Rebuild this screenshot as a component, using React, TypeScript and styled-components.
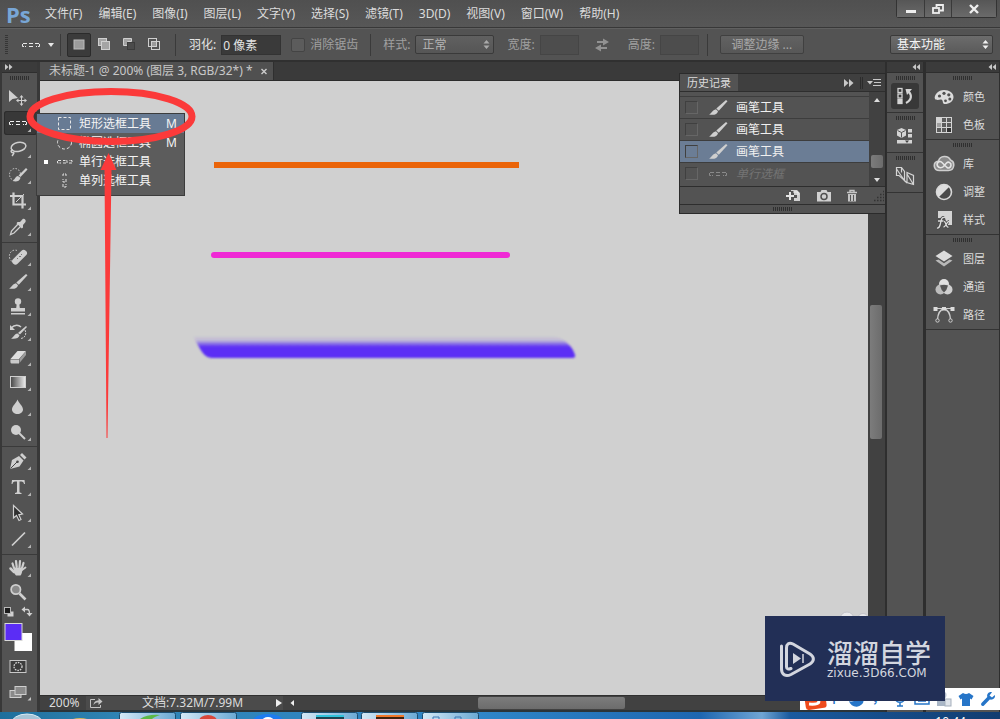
import React from "react";
import styled, { createGlobalStyle } from "styled-components";

const ui = '"Noto Sans", "Noto Sans CJK SC", sans-serif';

const GlobalStyle = createGlobalStyle`
  * { box-sizing: border-box; }
  body { margin: 0; background: #535353; }
  button, input, select { font: inherit; color: inherit; margin: 0; border-radius: 0; }
  button { padding: 0; border: 0; background: none; }
  svg { display: block; flex: none; }
`;

/* ---------- shell ---------- */

const Screen = styled.div`
  position: relative;
  display: flex;
  flex-direction: column;
  min-height: 100vh;
  overflow: hidden;
  background: #535353;
  color: #dcdcdc;
  font: 12px/16px ${ui};
`;

const MenuBar = styled.header`
  display: flex;
  align-items: center;
  height: 28px;
  padding-right: 3px;
  border-bottom: 1px solid #383838;
  background: linear-gradient(#505050, #575757);
`;

const Brand = styled.span`
  width: 45px;
  padding-left: 6px;
  color: #78a6d6;
  font: bold 22px/24px "Open Sans", sans-serif;
`;

const Menus = styled.nav`
  display: flex;
  gap: 16px;
`;

const MenuButton = styled.button`
  height: 24px;
  white-space: nowrap;
`;

const WindowButtons = styled.div`
  display: flex;
  align-self: flex-start;
  margin-left: auto;
  border: 1px solid #333;
  border-top: 0;
  border-radius: 0 0 3px 3px;
`;

const WindowButton = styled.button<{ $wide?: boolean }>`
  display: grid;
  place-items: center;
  width: ${(p) => (p.$wide ? 45 : 27)}px;
  height: 17px;
  background: linear-gradient(#565656, #6a6a6a);
  & + & { border-left: 1px solid #3a3a3a; }
`;

const OptionsBar = styled.section`
  display: flex;
  align-items: center;
  height: 34px;
  padding: 0 7px 0 5px;
  border-top: 1px solid #606060;
  border-bottom: 2px solid #303030;
  background: #535353;
  white-space: nowrap;
`;

const Divider = styled.i<{ $left?: number; $right?: number }>`
  width: 1px;
  height: 22px;
  margin: 0 ${(p) => p.$right ?? 6}px 0 ${(p) => p.$left ?? 8}px;
  background: #3a3a3a;
`;

const ToolPreset = styled.button`
  display: flex;
  align-items: center;
  gap: 7px;
  margin-left: 13px;
`;

const ModeButton = styled.button<{ $active?: boolean }>`
  display: grid;
  place-items: center;
  width: 24px;
  height: 24px;
  margin-right: 1px;
  border: 1px solid ${(p) => (p.$active ? "#2b2b2b" : "transparent")};
  border-radius: 2px;
  background: ${(p) => (p.$active ? "#3b3b3b" : "none")};
`;

const Field = styled.label<{ $dim?: boolean; $gap?: number }>`
  display: flex;
  align-items: center;
  gap: 5px;
  margin-right: ${(p) => p.$gap ?? 0}px;
  color: ${(p) => (p.$dim ? "#a0a0a0" : "#e4e4e4")};
`;

const TextBox = styled.input<{ $w: number }>`
  width: ${(p) => p.$w}px;
  height: 20px;
  padding: 0 1px;
  border: 1px solid ${(p) => (p.disabled ? "#454545" : "#333")};
  background: ${(p) => (p.disabled ? "#4d4d4d" : "#3a3a3a")};
  outline: 0;
`;

const CheckBox = styled.input`
  appearance: none;
  width: 14px;
  height: 14px;
  border: 1px solid #444;
  border-radius: 2px;
  background: #5c5c5c;
`;

const SelectBox = styled.span<{ $w: number; $bright?: boolean; $end?: boolean }>`
  position: relative;
  width: ${(p) => p.$w}px;
  margin-left: ${(p) => (p.$end ? "auto" : 0)};
  color: ${(p) => (p.$bright ? "#f4f4f4" : "#b4b4b4")};
  select {
    appearance: none;
    display: block;
    width: 100%;
    height: 19px;
    padding: 0 6px;
    border: 1px solid #3a3a3a;
    border-radius: 2px;
    background: linear-gradient(${(p) => (p.$bright ? "#6c6c6c, #5a5a5a" : "#606060, #565656")});
    line-height: 16px;
    opacity: 1;
  }
  svg {
    position: absolute;
    top: 5px;
    right: 4px;
    pointer-events: none;
  }
`;

const PushButton = styled.button`
  width: 84px;
  height: 19px;
  margin-left: 6px;
  border: 1px solid #404040;
  border-radius: 2px;
  background: linear-gradient(#626262, #575757);
  color: #a8a8a8;
`;

const Swap = styled.button`
  width: 16px;
  margin: 0 18px 0 15px;
`;

const Workspace = styled.main`
  position: relative;
  display: flex;
  flex: 1;
  background: #383838;
`;

/* ---------- tools ---------- */

const ToolColumn = styled.aside`
  display: flex;
  flex-direction: column;
  width: 40px;
  border: 0 solid #383838;
  border-width: 0 3px 0 2px;
  background: #535353;
`;

const Collapse = styled.button<{ $end?: boolean }>`
  display: flex;
  align-items: center;
  justify-content: ${(p) => (p.$end ? "flex-end" : "flex-start")};
  height: 11px;
  padding: 0 3px;
  border-bottom: 1px solid #2e2e2e;
  background: #3b3b3b;
`;

const Grip = styled.i<{ $slim?: boolean }>`
  display: block;
  width: 19px;
  height: 4px;
  margin: ${(p) => (p.$slim ? 2 : 3)}px auto;
  background: repeating-linear-gradient(90deg, #2f2f2f 0 1px, #535353 1px 2px);
`;

const SideGrip = styled.i`
  width: 3px;
  height: 20px;
  background: repeating-linear-gradient(#363636 0 1px, #535353 1px 2px);
`;

const ToolGroup = styled.div<{ $pitch: number }>`
  display: grid;
  grid-auto-rows: ${(p) => p.$pitch}px;
  align-items: center;
  padding: 1px 0 2px;
  & + & { border-top: 1px solid #3a3a3a; }
`;

const Tool = styled.button<{ $active?: boolean }>`
  height: 24px;
  margin-left: 2px;
  border-radius: 3px;
  background: ${(p) => (p.$active ? "#383838" : "none")};
  box-shadow: ${(p) => (p.$active ? "inset 0 0 0 1px #2c2c2c" : "none")};
`;

const ColorArea = styled.div`
  padding-left: 1px;
`;

/* ---------- document ---------- */

const Document = styled.section`
  display: flex;
  flex: 1;
  flex-direction: column;
  min-width: 0;
`;

const TabStrip = styled.div`
  display: flex;
  height: 19px;
  border-bottom: 1px solid #2c2c2c;
  background: #3a3a3a;
`;

const DocTab = styled.div`
  display: flex;
  align-items: center;
  gap: 6px;
  padding: 0 4px 0 9px;
  border-right: 1px solid #2f2f2f;
  background: #505050;
  color: #c8c8c8;
`;

const CloseTab = styled.button`
  width: 10px;
  height: 16px;
`;

const CanvasRow = styled.div`
  display: flex;
  flex: 1;
`;

const Canvas = styled.div`
  flex: 1;
  background: #d0d0d0;
`;

const VScroll = styled.div`
  width: 17px;
  padding: 224px 2px 0;
  background: #414141;
`;

const Thumb = styled.i<{ $w: number; $h: number }>`
  display: block;
  width: ${(p) => p.$w}px;
  height: ${(p) => p.$h}px;
  border-radius: 2px;
  background: ${(p) => (p.$w > p.$h ? "linear-gradient(#7c7c7c, #6c6c6c)" : "linear-gradient(90deg, #7c7c7c, #6c6c6c)")};
`;

const StatusBar = styled.footer`
  display: flex;
  align-items: center;
  height: 17px;
  border-top: 1px solid #303030;
  border-bottom: 2px solid #2b3438;
  background: #414141;
`;

const Zoom = styled.span`
  width: 46px;
  padding-left: 9px;
  line-height: 14px;
`;

const StatusInfo = styled.button`
  display: flex;
  align-items: center;
  width: 197px;
  height: 14px;
  padding-left: 4px;
  background: #4b4b4b;
  line-height: 14px;
  span { flex: 1; text-align: left; padding-left: 39px; }
`;

const HScroll = styled.div`
  display: flex;
  flex: 1;
  align-items: center;
  padding-left: 7px;
  gap: 184px;
`;

/* ---------- docks ---------- */

const Dock = styled.aside<{ $w: number }>`
  display: flex;
  flex-direction: column;
  width: ${(p) => p.$w}px;
  border: 0 solid #2e2e2e;
  border-width: 0 1px 0 2px;
  background: #535353;
`;

const IconGroup = styled.div`
  display: flex;
  flex-direction: column;
  height: 40px;
  border-bottom: 1px solid #333;
`;

const DockButton = styled.button<{ $active?: boolean }>`
  display: grid;
  place-items: center;
  align-self: center;
  width: 28px;
  height: 26px;
  border-radius: 3px;
  background: ${(p) => (p.$active ? "#383838" : "none")};
`;

const PanelGroup = styled.div`
  display: flex;
  flex-direction: column;
  border-bottom: 1px solid #333;
`;

const PanelButton = styled.button`
  display: flex;
  align-items: center;
  gap: 8px;
  height: 28px;
  padding-left: 7px;
  font-size: 11px;
`;

/* ---------- floating history panel ---------- */

const History = styled.section`
  position: absolute;
  top: 11px;
  right: 114px;
  width: 207px;
  border: 1px solid #2b2b2b;
  background: #535353;
`;

const HistoryHead = styled.header`
  display: flex;
  align-items: center;
  height: 18px;
  padding-right: 3px;
  border-bottom: 1px solid #2e2e2e;
  background: #3f3f3f;
  h2 {
    margin: 0 auto 0 0;
    padding: 0 7px;
    background: #535353;
    font-size: 11px;
    line-height: 17px;
    font-weight: normal;
  }
`;

const HistoryBody = styled.div`
  display: flex;
`;

const HistoryList = styled.ul`
  flex: 1;
  margin: 0;
  padding: 4px 0 2px;
  list-style: none;
`;

const Step = styled.li<{ $on?: boolean; $off?: boolean }>`
  display: flex;
  align-items: center;
  height: 22px;
  padding-left: 5px;
  border-top: 1px solid #3d3d3d;
  background: ${(p) => (p.$on ? "#6b7d95" : "none")};
  color: ${(p) => (p.$off ? "#747474" : "#f0f0f0")};
  font-style: ${(p) => (p.$off ? "italic" : "normal")};
  svg { margin: 0 8px 0 10px; }
`;

const Source = styled.input`
  appearance: none;
  width: 13px;
  height: 13px;
  border: 1px solid #444;
  border-color: #404040 #666 #666 #404040;
  background: transparent;
`;

const ListScroll = styled.div`
  display: flex;
  flex-direction: column;
  align-items: center;
  width: 16px;
  padding: 6px 0 4px;
  background: #414141;
  ${Thumb} { margin: auto 0 10px; }
`;

const HistoryFoot = styled.footer`
  display: flex;
  align-items: center;
  justify-content: flex-end;
  gap: 14px;
  height: 19px;
  border: 1px solid #2e2e2e;
  border-width: 1px 0;
`;

/* ---------- flyout and annotation ---------- */

const Flyout = styled.div`
  position: absolute;
  top: 51px;
  left: 36px;
  width: 149px;
  padding: 0 0 5px;
  border: 1px solid #3c3c3c;
  background: #5c5c5c;
`;

const FlyoutItem = styled.button<{ $on?: boolean }>`
  display: grid;
  grid-template-columns: 20px 22px 1fr 18px;
  align-items: center;
  width: 100%;
  height: 19px;
  background: ${(p) => (p.$on ? "#687b94" : "none")};
  color: #f4f4f4;
  text-align: left;
  line-height: 18px;
`;

const Marker = styled.i<{ $on?: boolean }>`
  justify-self: center;
  width: 4px;
  height: 4px;
  margin-right: 2px;
  background: ${(p) => (p.$on ? "#fff" : "none")};
`;

const Annotation = styled.svg`
  position: absolute;
  top: 0;
  left: 0;
  pointer-events: none;
`;

/* ---------- desktop bottom ---------- */

const Taskbar = styled.footer`
  display: flex;
  height: 7px;
  overflow: hidden;
  padding-right: 34px;
  background: linear-gradient(90deg, #1f6f9c, #2f84b4 120px, #2f86c8 480px, #1d66b0 700px, #6fa5d4 762px, #1a5a9e 790px, #113c70);
`;

const Clock = styled.time`
  margin-left: auto;
  padding-top: 4px;
  color: #fff;
  font-size: 12px;
  line-height: 12px;
`;

const ImeBar = styled.div`
  position: absolute;
  right: 0;
  bottom: 9px;
  display: flex;
  align-items: center;
  gap: 4px;
  height: 22px;
  padding: 0 3px;
  background: #fff;
  color: #2675c8;
  font-weight: bold;
`;

const ImeKey = styled.button`
  display: grid;
  place-items: center;
  width: 18px;
  height: 20px;
`;

const Watermark = styled.div`
  position: absolute;
  right: 55px;
  bottom: 18px;
  display: flex;
  align-items: center;
  gap: 12px;
  width: 180px;
  height: 85px;
  padding-left: 15px;
  background: #222f56;
  color: #d3d6df;
  white-space: nowrap;
`;

const Bubbles = styled.svg`
  position: absolute;
  right: 130px;
  bottom: 94px;
`;

const WatermarkTitle = styled.div`
  font: 500 26px/28px "Noto Sans CJK SC", sans-serif;
`;

const WatermarkUrl = styled.div`
  font: 12px/14px "DejaVu Sans", sans-serif;
`;

/* ---------- drawings ---------- */

const G = "#cfcfcf";

const BrushShape = () => (
  <g fill={G}>
    <path d="M18 2 L19.500 3.300 L10.800 12.800 L8.300 10.600 Z" />
    <path d="M8 11.300 L10 13.200 C9.500 16.500 5.500 17.500 1 16.500 C4 15.500 4 12 8 11.300Z" />
  </g>
);

const Dashes = ({ color = G }: { color?: string }) => (
  <g fill="none" stroke={color} strokeWidth="1">
    <path d="M6 8.500H1.500V11.500H5 M8 11.500H12M8 8.500H12 M14 8.500H18.500V11.500H15" strokeDasharray="4 1" />
  </g>
);

const shapes: Record<string, React.ReactNode> = {
  move: (
    <g fill={G}>
      <path d="M1 3 L1 15 L4.500 12 L10 11 Z" />
      <path d="M13.500 8 L15.500 10.500H14V13H16.500V11.500L19 13.500L16.500 15.500V14H14V16.500H15.500L13.500 19L11.500 16.500H13V14H10.500V15.500L8 13.500L10.500 11.500V13H13V10.500H11.500Z" />
    </g>
  ),
  marquee: <Dashes color="#f0f0f0" />,
  lasso: (
    <g fill="none" stroke={G} strokeWidth="1.500">
      <ellipse cx="10.500" cy="8" rx="7.500" ry="4.500" transform="rotate(-12 10 8)" />
      <path d="M5 11C2 11 3 14 5 13.500C7 13 5 16 4 17" />
    </g>
  ),
  quick: (
    <g>
      <ellipse cx="7" cy="9.500" rx="5.500" ry="6" fill="none" stroke={G} strokeDasharray="1.500 1.500" />
      <path d="M18 3L19.500 4.500L12.500 12L10.500 10.500Z" fill={G} />
      <path d="M10 11L12.500 13C11.500 16.500 8 17 4.500 16C7 15 7 11.500 10 11Z" fill={G} />
    </g>
  ),
  crop: (
    <g fill="none" stroke={G} strokeWidth="2.200">
      <path d="M5.500 1.500V13.500H18M2 5H14.500V17.500" />
      <path d="M8 11L16 3" strokeWidth="1" />
    </g>
  ),
  eyedropper: (
    <g>
      <path d="M11 6L3.500 14L2.500 17.500L6 16L13.500 8.500" fill="none" stroke={G} strokeWidth="1.300" />
      <path d="M9.500 5L12 5L14.500 2.200C16 1 18.500 3 17.500 5L15 8V10.500L13.800 11.500L8.500 6.200Z" fill={G} />
    </g>
  ),
  healing: (
    <g>
      <path d="M9 3.500A5.500 6 0 1 0 5 15" fill="none" stroke={G} strokeDasharray="1.500 1.500" />
      <rect x="2.500" y="7" width="18" height="6.500" rx="3" transform="rotate(-45 11.500 10.200)" fill={G} />
      <path d="M9 11l1 1m1-3l1 1m1-3l1 1m-2 1l1 1m-4 1l1 1" stroke="#777" />
    </g>
  ),
  brush: <BrushShape />,
  stamp: (
    <g fill={G}>
      <circle cx="10" cy="4.500" r="3.200" />
      <path d="M8.700 7H11.300L11.800 11H17V14.500H3V11H8.200Z" />
      <path d="M3 16H17V17.500H3Z" />
    </g>
  ),
  historyBrush: (
    <g>
      <path d="M18 4L19 5L12 12.500L10 11Z" fill={G} />
      <path d="M9.500 11.500L11.500 13.200C11 16 7 17.500 3 16.500C6 15.500 6 12 9.500 11.500Z" fill={G} />
      <path d="M3 6C7 2 11 3 13 5" fill="none" stroke={G} strokeWidth="1.500" />
      <path d="M2 3V8H7Z" fill={G} />
      <path d="M17 8C19 12 17 16 13 16.500" fill="none" stroke={G} strokeDasharray="2 1" />
    </g>
  ),
  eraser: (
    <g>
      <path d="M9.500 4L18 4L11 12H2.500Z" fill="#dedede" />
      <path d="M18 4V8L11.500 16V12Z" fill="#9c9c9c" />
      <path d="M2.500 12.500H11V16.500H3.500Q2 16.500 2.500 12.500Z" fill="#c9c9c9" />
    </g>
  ),
  gradient: (
    <g>
      <defs>
        <linearGradient id="toolGradient">
          <stop offset="0" stopColor="#444" />
          <stop offset="1" stopColor="#eee" />
        </linearGradient>
      </defs>
      <rect x="2.500" y="4.500" width="15" height="11" fill="url(#toolGradient)" stroke={G} />
    </g>
  ),
  blur: <path d="M9.500 2.500C11 6.500 15 9 15 12.500C15 15 12.500 17 9.500 17C6.500 17 4 15 4 12.500C4 9 8 6.500 9.500 2.500Z" fill={G} />,
  dodge: (
    <g>
      <circle cx="8" cy="8" r="5" fill={G} />
      <path d="M11 11L17 17" stroke={G} strokeWidth="2" />
    </g>
  ),
  pen: (
    <g>
      <path d="M2 18L4 9L11 5L15.500 9.500L11.500 15.500Z" fill={G} />
      <path d="M12 4L14 2L18.500 6.500L16.500 8.500Z" fill={G} />
      <path d="M2.500 17.500L9 11" stroke="#484848" />
      <circle cx="9.500" cy="10.800" r="1.300" fill="#484848" />
    </g>
  ),
  type: <path d="M4 3H16.500L17 7H16C15.500 5 15 4.500 11.500 4.500V14.500C11.500 15.500 12 15.800 13.500 16V17H7V16C8.500 15.800 9 15.500 9 14.500V4.500C5.500 4.500 5 5 4.500 7H3.500Z" fill={G} />,
  select: <path d="M5.500 2.500V15L8.500 12.500L11 17.500L13 16.500L10.800 11.800L14.500 11Z" fill="#2f2f2f" stroke={G} strokeWidth="1.200" />,
  line: <path d="M4 16.500L17 3.500" stroke={G} strokeWidth="1.700" />,
  hand: (
    <g fill="none" stroke={G} strokeLinecap="round">
      <path d="M6 10L4.500 5.500M8.700 9L8 3M11.500 9L12 3M14 10L15.500 5" strokeWidth="2.200" />
      <path d="M2.500 10.500L6 14" strokeWidth="2.500" />
      <path d="M6 9.500H14.500C14.500 13 14 15.500 12.500 17.500H8C6.500 16 5.500 14 5.500 12Z" fill={G} stroke="none" />
      <path d="M14 12L17.500 9.500" strokeWidth="1.800" />
    </g>
  ),
  zoom: (
    <g>
      <circle cx="7.800" cy="7.500" r="4.700" fill="#8a8a8a" stroke={G} strokeWidth="1.700" />
      <path d="M11.500 11.500L17.500 17.500" stroke={G} strokeWidth="2.600" />
    </g>
  ),
};

const ToolIcon = ({ name }: { name: string }) => (
  <svg width="33" height="24" viewBox="0 0 33 24" aria-hidden="true">
    <g transform="translate(4 2)">{shapes[name]}</g>
    {name !== "move" && name !== "zoom" && <path d="M27 17.500V21H23.500Z" fill="#b4b4b4" />}
  </svg>
);

const UpDown = ({ color }: { color: string }) => (
  <svg width="7" height="9" viewBox="0 0 7 9" aria-hidden="true">
    <path d="M0.500 3.500L3.500 0L6.500 3.500ZM0.500 5.500L3.500 9L6.500 5.500Z" fill={color} />
  </svg>
);

const Chevrons = ({ left }: { left?: boolean }) => (
  <svg width="8" height="6" viewBox="0 0 8 6" aria-hidden="true">
    <path d={left ? "M4 0V6L0.500 3ZM8 0V6L4.500 3Z" : "M0 0V6L3.500 3ZM4 0V6L7.500 3Z"} fill="#c8c8c8" />
  </svg>
);

const modeShapes = [
  <rect key="a" x="3" y="3" width="10" height="9" fill="#9c9c9c" stroke="#bcbcbc" />,
  <g key="b" fill="#a4a4a4" stroke="#cfcfcf"><rect x="2.500" y="1.500" width="8" height="7" /><rect x="5.500" y="4.500" width="8" height="8" /></g>,
  <g key="c"><path d="M2.500 8.500V1.500H10.500V4.500H6.500V8.500Z" fill="#a4a4a4" stroke="#cfcfcf" /><rect x="6.500" y="5.500" width="7" height="7" fill="#4b4b4b" stroke="#3c3c3c" /></g>,
  <g key="d" fill="none" stroke="#cfcfcf"><rect x="2.500" y="1.500" width="8" height="8" /><rect x="5.500" y="4.500" width="8" height="8" /><rect x="6" y="5" width="4" height="4" fill="#999" stroke="none" /></g>,
];

const panelShapes: Record<string, React.ReactNode> = {
  颜色: (
    <g>
      <path d="M10 3C15.500 3 19.500 6 19.500 10C19.500 14.500 15 17 11 17C8 17 9.500 14.300 8 13C6.500 11.800 3 14 1 12C-0.500 8 4.500 3 10 3Z" fill="#dcdcdc" />
      <g fill="#505050"><circle cx="5.500" cy="9" r="1.600" /><circle cx="10" cy="6.300" r="1.600" /><circle cx="14.800" cy="7.800" r="1.600" /><circle cx="15.800" cy="12" r="1.500" /><circle cx="11.500" cy="13.800" r="1.400" /></g>
    </g>
  ),
  色板: (
    <g>
      <rect x="2" y="2" width="16" height="16" fill="#d4d4d4" />
      <g fill="#5c5c5c"><rect x="8" y="3" width="4" height="4" /><rect x="13" y="3" width="4" height="4" /><rect x="3" y="8" width="4" height="4" fill="#a0a0a0" /><rect x="8" y="8" width="4" height="4" /><rect x="13" y="8" width="4" height="4" /><rect x="3" y="13" width="4" height="4" /><rect x="8" y="13" width="4" height="4" /><rect x="13" y="13" width="4" height="4" fill="#333" /></g>
    </g>
  ),
  库: (
    <g fill="none" stroke="#cfcfcf">
      <path d="M5.500 16.500C-1 16.500 -1.500 8 4.500 7C6 1.500 14 1 16.500 6C21.500 8 20.500 16.500 14.500 16.500Z" strokeWidth="1.600" fill="#8a8a8a" />
      <path d="M13 13.500L8 8.500C5.500 6 2 9 3.500 12C5 14.500 8 14 9.500 12.500L12.500 9C14.500 7 17.500 9 17 11.500C16.500 14 14.500 14.500 13 13.500Z" strokeWidth="1.600" stroke="#e4e4e4" />
    </g>
  ),
  调整: (
    <g>
      <circle cx="10" cy="10" r="7.500" fill="#4a4a4a" stroke="#d8d8d8" strokeWidth="1.600" />
      <path d="M4.700 15.300A7.500 7.500 0 0 1 15.300 4.700Z" fill="#dedede" />
    </g>
  ),
  样式: (
    <g>
      <path d="M4 1H18V15H13L11 8L4 8Z" fill="#d4d4d4" />
      <path d="M10 7.500C7.500 7 7.500 9 6.800 12C6 16 5.500 18.500 3 18M4 11H9.500M10 11.500C12 11 12 18 14.500 17M15 11.500C12.500 11.500 12 17 9.500 17" fill="none" stroke="#484848" strokeWidth="3" />
      <path d="M10 7.500C7.500 7 7.500 9 6.800 12C6 16 5.500 18.500 3 18M4 11H9.500M10 11.500C12 11 12 18 14.500 17M15 11.500C12.500 11.500 12 17 9.500 17" fill="none" stroke="#dcdcdc" strokeWidth="1.300" />
    </g>
  ),
  图层: (
    <g fill="#dcdcdc">
      <path d="M10 1.500L18.500 7L10 12.500L1.500 7Z" />
      <path d="M1.500 11.500L4.500 10.500L10 14.200L15.500 10.500L18.500 11.500L10 17.500Z" fill="#b8b8b8" />
    </g>
  ),
  通道: (
    <g>
      <circle cx="10" cy="7" r="5" fill="#e0e0e0" />
      <circle cx="6.500" cy="12.500" r="5" fill="#bdbdbd" />
      <circle cx="13.500" cy="12.500" r="5" fill="#d0d0d0" />
      <path d="M6 8.500Q10 7 14 8.500Q13 13 10 15.500Q7 13 6 8.500Z" fill="#555" />
    </g>
  ),
  路径: (
    <g fill="none" stroke="#cfcfcf">
      <path d="M1 3.500H19" />
      <path d="M3.500 14.500C4 8 7 4.500 10 4C13 4.500 16 8 16.500 14.500" strokeWidth="1.300" />
      <g fill="#dcdcdc" stroke="none"><rect x="-0.500" y="2" width="4" height="4" /><rect x="8" y="2" width="4" height="3.500" /><rect x="16.500" y="2" width="4" height="4" /></g>
      <circle cx="3.500" cy="15.500" r="1.700" fill="#535353" /><circle cx="16.500" cy="15.500" r="1.700" fill="#535353" />
    </g>
  ),
};

const dockShapes = [
  <g key="h" fill="none" stroke="#d4d4d4" strokeWidth="1.300">
    <rect x="3" y="2.500" width="4" height="4" /><rect x="3" y="8" width="4" height="4" /><rect x="3" y="13.500" width="4" height="4" fill="#d4d4d4" />
    <path d="M11 17C17 14 17 9 13.500 5.500" strokeWidth="2.200" /><path d="M10.500 3H17L12 9Z" fill="#d4d4d4" stroke="none" />
  </g>,
  <g key="p">
    <path d="M6.500 2L11 4V9.500L6.500 12L2 9.500V4Z" fill="#d4d4d4" /><path d="M2.500 4.500L6.500 6.500L10.500 4.500M6.500 6.500V11.500" stroke="#555" fill="none" />
    <path d="M13 3H17V6.500H13ZM13 8H17V11.500H13Z" fill="#d4d4d4" /><rect x="2" y="14" width="15" height="3.500" fill="#d4d4d4" /><path d="M10 14.500H14L12 17Z" fill="#444" />
  </g>,
  <g key="c" fill="none" stroke="#d4d4d4" strokeWidth="1.200">
    <path d="M1.500 1.500H6.500L9.500 5.500V14.500L4 9.500H1.500ZM6.500 1.500V6.500" /><path d="M1.500 3L9.500 14.500" />
    <path d="M9.500 14.500L12 17M12 6.500L18.500 9.500V18.500L12 16.500ZM12 8L18.500 18.500" />
  </g>,
];

/* ---------- components ---------- */

const menus = ["文件(F)", "编辑(E)", "图像(I)", "图层(L)", "文字(Y)", "选择(S)", "滤镜(T)", "3D(D)", "视图(V)", "窗口(W)", "帮助(H)"];

const toolGroups: { pitch: number; tools: [string, string][] }[] = [
  { pitch: 26, tools: [["move", "移动工具"], ["marquee", "选框工具"], ["lasso", "套索工具"], ["quick", "快速选择"], ["crop", "裁剪"], ["eyedropper", "吸管"]] },
  { pitch: 25, tools: [["healing", "修复画笔"], ["brush", "画笔"], ["stamp", "仿制图章"], ["historyBrush", "历史记录画笔"], ["eraser", "橡皮擦"], ["gradient", "渐变"], ["blur", "模糊"], ["dodge", "减淡"]] },
  { pitch: 26, tools: [["pen", "钢笔"], ["type", "文字"], ["select", "路径选择"], ["line", "直线"]] },
  { pitch: 24, tools: [["hand", "抓手"], ["zoom", "缩放"]] },
];

const panelGroups = [["颜色", "色板"], ["库", "调整", "样式"], ["图层", "通道", "路径"]];

const Toolbar = () => (
  <ToolColumn>
    <Collapse aria-label="展开"><Chevrons /></Collapse>
    <Grip />
    <div>
      {toolGroups.map((g, i) => (
        <ToolGroup key={i} $pitch={g.pitch}>
          {g.tools.map(([id, label]) => (
            <Tool key={id} $active={id === "marquee"} aria-label={label}><ToolIcon name={id} /></Tool>
          ))}
        </ToolGroup>
      ))}
    </div>
    <ColorArea>
      <svg width="34" height="98" viewBox="3 606 34 98" aria-hidden="true">
        <rect x="7.500" y="611.500" width="6" height="5" fill="#d0d0d0" />
        <rect x="4.500" y="607.500" width="6" height="6" fill="#1c1c1c" stroke="#b8b8b8" />
        <path d="M24 609.500H27.500Q29.500 609.500 29.500 614" fill="none" stroke="#d0d0d0" strokeWidth="1.300" />
        <path d="M21.500 609.500L25 606.500V612.500ZM26.500 613H32.500L29.500 616.500Z" fill="#d0d0d0" />
        <rect x="14.500" y="633" width="17.500" height="18" fill="#fff" />
        <rect x="5" y="623.500" width="17" height="17" fill="#5b2df5" stroke="#d8d8d8" />
        <rect x="10" y="660.500" width="16" height="12" fill="#3c3c3c" stroke="#c8c8c8" />
        <circle cx="18" cy="666.500" r="4" fill="none" stroke="#d4d4d4" strokeWidth="1.300" strokeDasharray="1.600 1" />
        <rect x="10" y="690.500" width="11" height="7" fill="#8a8a8a" stroke="#cfcfcf" />
        <rect x="15" y="686.500" width="11" height="8" fill="#8a8a8a" stroke="#cfcfcf" />
        <path d="M31 697V700.500H27.500Z" fill="#c4c4c4" />
      </svg>
    </ColorArea>
  </ToolColumn>
);

const Artwork = () => (
  <svg width="600" height="300" viewBox="0 0 600 300" aria-hidden="true">
    <defs>
      <linearGradient id="violet" x1="0" y1="255" x2="0" y2="278" gradientUnits="userSpaceOnUse">
        <stop offset="0" stopColor="#5b2df5" stopOpacity="0" />
        <stop offset="0.200" stopColor="#5b2df5" stopOpacity="0.150" />
        <stop offset="0.320" stopColor="#5b2df5" stopOpacity="0.550" />
        <stop offset="0.480" stopColor="#5b2df5" />
      </linearGradient>
      <filter id="soft"><feGaussianBlur stdDeviation="0.900" /></filter>
      <filter id="softer" x="-5%" y="-50%" width="110%" height="200%"><feGaussianBlur stdDeviation="0.600" /></filter>
    </defs>
    <rect x="174" y="81" width="305" height="6" fill="#ea6409" />
    <rect x="171" y="171" width="299" height="6" rx="3" fill="#ef2bd5" filter="url(#softer)" />
    <path d="M153 255H514C525 258 533 266 535 274Q536 277 532 277H172C163 277 160 267 153 255Z" fill="url(#violet)" filter="url(#soft)" />
  </svg>
);

const Brush = () => <svg width="20" height="20" viewBox="0 0 20 20" aria-hidden="true"><BrushShape /></svg>;

const HistoryPanel = () => (
  <History aria-label="历史记录">
    <HistoryHead>
      <h2>历史记录</h2>
      <svg width="38" height="12" viewBox="0 0 38 12" aria-hidden="true">
        <path d="M0 2V10L4.500 6ZM5 2V10L9.500 6Z" fill="#c8c8c8" />
        <path d="M16.500 0V12M18.500 0V12" stroke="#2c2c2c" />
        <path d="M23 4H29L26 7.500Z" fill="#c8c8c8" />
        <path d="M29 2.500H37M30 5.500H37M29 8.500H37" stroke="#c8c8c8" />
      </svg>
    </HistoryHead>
    <HistoryBody>
      <HistoryList>
        {[0, 1, 2].map((i) => (
          <Step key={i} $on={i === 2}>
            <Source type="checkbox" aria-label="设置历史记录画笔的源" /><Brush />画笔工具
          </Step>
        ))}
        <Step $off>
          <Source type="checkbox" aria-label="设置历史记录画笔的源" />
          <svg width="20" height="20" viewBox="0 0 20 20" aria-hidden="true"><Dashes color="#8a8a8a" /></svg>单行选框
        </Step>
      </HistoryList>
      <ListScroll>
        <svg width="6" height="4" viewBox="0 0 6 4" aria-hidden="true"><path d="M0 4L3 0L6 4Z" fill="#ddd" /></svg>
        <Thumb $w={12} $h={13} />
        <svg width="6" height="4" viewBox="0 0 6 4" aria-hidden="true"><path d="M0 0L3 4L6 0Z" fill="#ddd" /></svg>
      </ListScroll>
    </HistoryBody>
    <HistoryFoot>
      <button aria-label="从当前状态创建新文档">
        <svg width="16" height="14" viewBox="0 0 16 14"><path d="M5 2H8V6H11V9H8V12H14V4L11 1H5Z" fill="#d0d0d0" /><path d="M4 3V11M0 7H8" stroke="#e4e4e4" strokeWidth="2" /><path d="M7 3H12V6" fill="none" stroke="#eee" /></svg>
      </button>
      <button aria-label="创建新快照">
        <svg width="16" height="14" viewBox="0 0 16 14"><path d="M1 3H4.500L5.500 1H10.500L11.500 3H15V12.500H1Z" fill="#d0d0d0" /><circle cx="8" cy="7.500" r="3" fill="#d0d0d0" stroke="#505050" strokeWidth="1.500" /></svg>
      </button>
      <button aria-label="删除当前状态">
        <svg width="12" height="14" viewBox="0 0 12 14"><path d="M1 3.500H11M4 3V1.500H8V3" fill="none" stroke="#c4c4c4" strokeWidth="1.400" /><path d="M2 5H10V12.500H2Z" fill="#c4c4c4" /><path d="M4.500 6V12M7.500 6V12" stroke="#555" /></svg>
      </button>
      <svg width="13" height="13" viewBox="0 0 13 13" aria-hidden="true"><path d="M2 11.500H12M5 8.500H12M8 5.500H12M11 2.500H12" stroke="#333" strokeWidth="1.500" strokeDasharray="1.500 1.500" /></svg>
    </HistoryFoot>
    <Grip $slim />
  </History>
);

const flyoutItems = [
  { label: "矩形选框工具", key: "M", icon: <rect x="1.500" y="1.500" width="12" height="12" fill="none" stroke="#e8e8e8" strokeDasharray="3 2" /> },
  { label: "椭圆选框工具", key: "M", icon: <ellipse cx="7.500" cy="7.500" rx="7" ry="6.500" fill="none" stroke="#e8e8e8" strokeDasharray="3 2" /> },
  { label: "单行选框工具", key: "", icon: <path d="M4 6.500H0.500V9H4M6 9H10V6.500H6M12 9H15V6.500H12" fill="none" stroke="#e0e0e0" strokeDasharray="3 1" /> },
  { label: "单列选框工具", key: "", icon: <path d="M6 3V1H9V4M9 6V9H6V6M6 11V14H9V11" fill="none" stroke="#e0e0e0" strokeDasharray="3 1" /> },
];

const ToolFlyout = () => (
  <Flyout role="menu">
    {flyoutItems.map((it, i) => (
      <FlyoutItem key={it.label} role="menuitem" $on={i === 0}>
        <Marker $on={i === 2} />
        <svg width="16" height="15" viewBox="0 0 16 15" aria-hidden="true">{it.icon}</svg>
        <span>{it.label}</span>
        <span>{it.key}</span>
      </FlyoutItem>
    ))}
  </Flyout>
);

const TaskButtons = () => (
  <svg width="480" height="7" viewBox="0 0 480 7" aria-hidden="true">
    <defs><linearGradient id="glass"><stop offset="0" stopColor="#d4e9f6" /><stop offset="1" stopColor="#6aa9d4" /></linearGradient></defs>
    <ellipse cx="27" cy="12" rx="16" ry="10" fill="#a6c4d6" stroke="#dcebf3" />
    <ellipse cx="80" cy="9" rx="10" ry="3" fill="#d8b75c" />
    {[119, 180, 301, 361, 422].map((x) => (
      <rect key={x} x={x + 0.5} y="0.500" width="56" height="10" rx="2" fill="url(#glass)" stroke="#1b4d70" />
    ))}
    <path d="M140 7Q148 2 160 3Q154 5 152 7Z" fill="#5cb947" />
    <ellipse cx="208" cy="9" rx="9" ry="6" fill="#d9483b" />
    <ellipse cx="268" cy="9" rx="15" ry="7" fill="#1e7cf0" /><ellipse cx="268" cy="9" rx="6" ry="4" fill="#fff" />
    <path d="M316 4H344V7H316Z" fill="#1c4452" /><path d="M316 4H344" stroke="#2fc3dc" strokeWidth="2" />
    <path d="M376 4H404V7H376Z" fill="#3e2310" /><path d="M376 4H404" stroke="#f0782a" strokeWidth="2" />
    <path d="M433 7V5H439V7M455 7V5H461V7" fill="none" stroke="#3c76b4" />
  </svg>
);

const Ime = () => (
  <ImeBar>
    <ImeKey aria-label="输入法">
      <svg width="26" height="22" viewBox="0 0 26 22"><rect x="2" y="2" width="21" height="18" rx="3" fill="#ee4a1c" transform="rotate(-8 12 12)" /><path d="M18 4C10 1 6 6 12 9S18 16 6 15" fill="none" stroke="#fff" strokeWidth="3" /></svg>
    </ImeKey>
    <ImeKey>中</ImeKey>
    <ImeKey aria-label="半角"><svg width="16" height="16" viewBox="0 0 16 16"><path d="M10 1A7.500 7.500 0 1 1 1 10A7 7 0 0 0 10 1Z" fill="#2675c8" /></svg></ImeKey>
    <ImeKey>，</ImeKey>
    <ImeKey aria-label="语音"><svg width="12" height="16" viewBox="0 0 12 16"><rect x="3.500" y="0" width="5" height="9" rx="2.500" fill="#2675c8" /><path d="M1 6C1 13 11 13 11 6M6 11V15M3 15H9" fill="none" stroke="#2675c8" strokeWidth="1.500" /></svg></ImeKey>
    <ImeKey aria-label="软键盘"><svg width="16" height="14" viewBox="0 0 16 14"><rect x="1" y="1" width="14" height="11" fill="none" stroke="#2675c8" strokeWidth="1.500" /><path d="M4 9H12M3 5H13" stroke="#2675c8" strokeWidth="1.500" /></svg></ImeKey>
    <ImeKey aria-label="账户"><svg width="16" height="18" viewBox="0 0 16 18"><circle cx="7" cy="5" r="3.500" fill="#b8c2cf" /><path d="M1 16V11H9V16Z" fill="#a9b6c6" /><rect x="9" y="9" width="6" height="7" fill="#dfe4ea" stroke="#a5afbc" /></svg></ImeKey>
    <ImeKey aria-label="皮肤"><svg width="16" height="16" viewBox="0 0 16 16"><path d="M5 2Q8 4 11 2L15.500 5L13.500 8.500L12 7.500V15H4V7.500L2.500 8.500L0.500 5Z" fill="#2675c8" /></svg></ImeKey>
    <ImeKey aria-label="工具"><svg width="16" height="16" viewBox="0 0 16 16"><path d="M14.800 4L12 6.500L9.500 4.500L12 1.200C9 0.500 6.500 3 7.300 6L1.500 12C0 14 2.500 16 4 14.500L9.800 8.500C13 9.200 15.800 7 14.800 4Z" fill="#2675c8" /></svg></ImeKey>
  </ImeBar>
);

export default function App() {
  return (
    <Screen>
      <GlobalStyle />
      <MenuBar>
        <Brand>Ps</Brand>
        <Menus>{menus.map((m) => <MenuButton key={m}>{m}</MenuButton>)}</Menus>
        <WindowButtons>
          <WindowButton aria-label="最小化"><svg width="12" height="12" viewBox="0 0 12 12"><rect x="1" y="7" width="10" height="3" fill="#eee" /></svg></WindowButton>
          <WindowButton aria-label="还原"><svg width="12" height="12" viewBox="0 0 12 12"><g fill="none" stroke="#eee" strokeWidth="1.800"><rect x="1" y="5" width="6" height="5" /><path d="M4.500 4V2H11V7.500H8" /></g></svg></WindowButton>
          <WindowButton $wide aria-label="关闭"><svg width="12" height="12" viewBox="0 0 12 12"><path d="M2 2L10 10M10 2L2 10" stroke="#eee" strokeWidth="2.400" /></svg></WindowButton>
        </WindowButtons>
      </MenuBar>

      <OptionsBar>
        <SideGrip />
        <ToolPreset aria-label="工具预设">
          <svg width="20" height="20" viewBox="0 0 20 20"><Dashes color="#e8e8e8" /></svg>
          <svg width="6" height="4" viewBox="0 0 6 4"><path d="M0 0H6L3 4Z" fill="#e8e8e8" /></svg>
        </ToolPreset>
        <Divider $left={6} />
        {modeShapes.map((s, i) => (
          <ModeButton key={i} $active={i === 0} aria-label={["新选区", "添加到选区", "从选区减去", "与选区交叉"][i]}>
            <svg width="16" height="16" viewBox="0 0 16 16">{s}</svg>
          </ModeButton>
        ))}
        <Divider $right={13} />
        <Field $gap={10}>羽化: <TextBox $w={60} defaultValue="0 像素" /></Field>
        <Field $dim $gap={4}><CheckBox type="checkbox" disabled />消除锯齿</Field>
        <Divider $right={12} />
        <Field $dim $gap={13}>样式:
          <SelectBox $w={79}><select disabled><option>正常</option></select><UpDown color="#aaa" /></SelectBox>
        </Field>
        <Field $dim>宽度: <TextBox $w={39} disabled /></Field>
        <Swap aria-label="高度和宽度互换">
          <svg width="16" height="14" viewBox="0 0 16 14"><path d="M3 4H10M6 10H13" stroke="#929292" strokeWidth="2" /><path d="M9 0.500L15 4L9 7.500ZM7 6.500L1 10L7 13.500Z" fill="#929292" /></svg>
        </Swap>
        <Field $dim>高度: <TextBox $w={39} disabled /></Field>
        <Divider />
        <PushButton>调整边缘 ...</PushButton>
        <SelectBox $w={103} $bright $end>
          <select aria-label="工作区"><option>基本功能</option></select><UpDown color="#f0f0f0" />
        </SelectBox>
      </OptionsBar>

      <Workspace>
        <Toolbar />
        <Document>
          <TabStrip>
            <DocTab>
              未标题-1 @ 200% (图层 3, RGB/32*) *
              <CloseTab aria-label="关闭文档"><svg width="10" height="16" viewBox="0 0 10 16"><path d="M2.500 6L7.500 11M7.500 6L2.500 11" stroke="#ccc" strokeWidth="1.400" /></svg></CloseTab>
            </DocTab>
          </TabStrip>
          <CanvasRow>
            <Canvas><Artwork /></Canvas>
            <VScroll><Thumb $w={12} $h={134} /></VScroll>
          </CanvasRow>
          <StatusBar>
            <Zoom>200%</Zoom>
            <StatusInfo>
              <svg width="13" height="12" viewBox="0 0 13 12" aria-hidden="true"><path d="M5 2.500H0.500V10.500H10.500V8" fill="none" stroke="#c4c4c4" /><path d="M3.500 8C4 4.500 6 3.500 8.500 3.500V1L12.500 4.500L8.500 8V5.500C6 5.500 5 6 3.500 8Z" fill="#c4c4c4" /></svg>
              <span>文档:7.32M/7.99M</span>
              <svg width="8" height="10" viewBox="0 0 8 10" aria-hidden="true"><path d="M1 1V9L7 5Z" fill="#f0f0f0" /></svg>
            </StatusInfo>
            <HScroll>
              <svg width="4" height="6" viewBox="0 0 4 6" aria-hidden="true"><path d="M4 0V6L0.500 3Z" fill="#f0f0f0" /></svg>
              <Thumb $w={147} $h={12} />
            </HScroll>
          </StatusBar>
        </Document>

        <Dock $w={39}>
          <Collapse $end aria-label="展开面板"><Chevrons left /></Collapse>
          {dockShapes.map((s, i) => (
            <IconGroup key={i}>
              <Grip />
              <DockButton $active={i === 0} aria-label={["历史记录", "属性", "字符样式"][i]}>
                <svg width="20" height="20" viewBox="0 0 20 20">{s}</svg>
              </DockButton>
            </IconGroup>
          ))}
        </Dock>
        <Dock $w={76}>
          <Collapse $end aria-label="折叠面板"><Chevrons left /></Collapse>
          {panelGroups.map((g) => (
            <PanelGroup key={g[0]}>
              <Grip />
              {g.map((name) => (
                <PanelButton key={name}>
                  <svg width="22" height="20" viewBox="-1 0 22 20" aria-hidden="true">{panelShapes[name]}</svg>{name}
                </PanelButton>
              ))}
            </PanelGroup>
          ))}
        </Dock>

        <HistoryPanel />
        <ToolFlyout />
        <Annotation width="200" height="380" viewBox="0 62 200 380" aria-hidden="true">
          <ellipse cx="111" cy="116.500" rx="81" ry="25" fill="none" stroke="#fb3a3a" strokeWidth="7" />
          <path d="M108.500 153L116.500 170H111.500L107.500 438H106.500L104.500 170H100.500Z" fill="#fb3a3a" />
        </Annotation>
      </Workspace>

      <Taskbar>
        <TaskButtons />
        <Clock>10:44</Clock>
      </Taskbar>
      <Ime />
      <Bubbles width="32" height="14" viewBox="0 0 32 14" aria-hidden="true">
        <g fill="#e8e8ea" stroke="#c2c2c8"><circle cx="9" cy="8" r="7" /><circle cx="25" cy="8" r="5.500" /></g>
      </Bubbles>
      <Watermark>
        <svg width="35" height="38" viewBox="0 0 35 38" aria-hidden="true">
          <path d="M1.500 6V29C1.500 35 6 37 11 34.500L30 24C34.500 21 34.500 17 30 14L13 4C9 2 6.500 4 6.500 8V27C6.500 29 8.500 29.500 11 28.500" fill="none" stroke="#d3d6df" strokeWidth="3" strokeLinejoin="round" strokeLinecap="round" />
          <path d="M13 13L21 18.500L13 24Z" fill="#d3d6df" /><path d="M23 14V23" stroke="#d3d6df" strokeWidth="1.500" />
        </svg>
        <div>
          <WatermarkTitle>溜溜自学</WatermarkTitle>
          <WatermarkUrl>zixue.3D66.COM</WatermarkUrl>
        </div>
      </Watermark>
    </Screen>
  );
}
